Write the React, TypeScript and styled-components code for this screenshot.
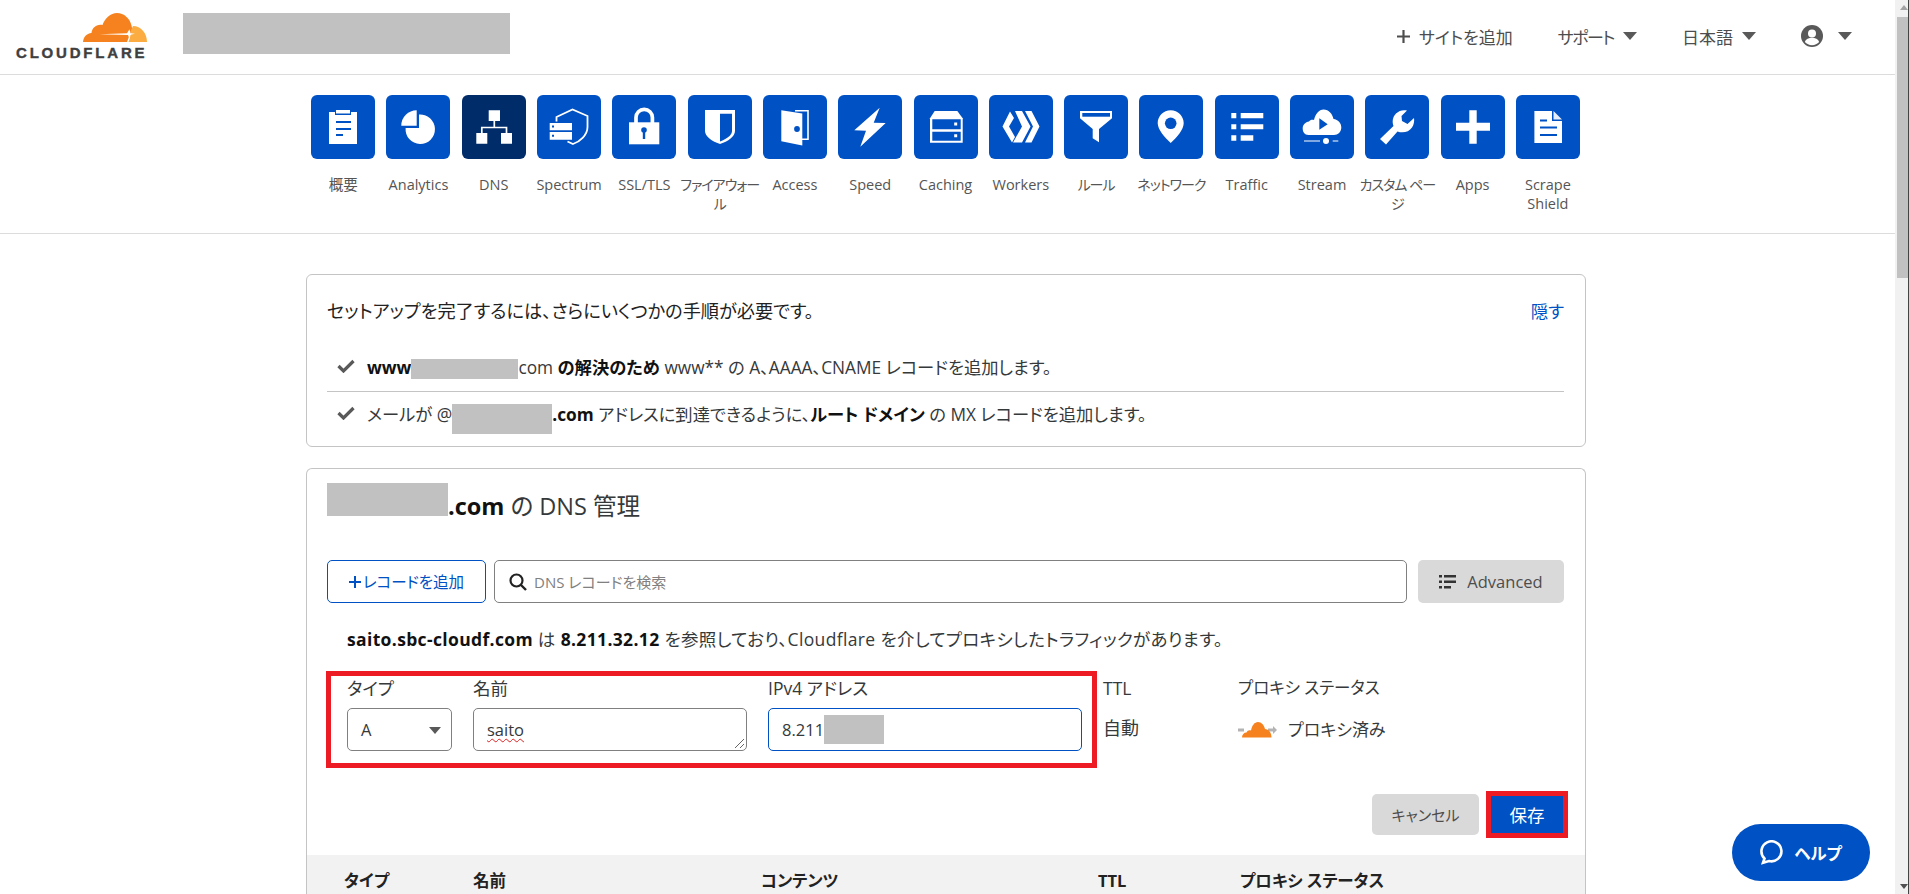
import React from 'react';
import styled, { createGlobalStyle } from 'styled-components';

const BLUE = '#0051c3';
const FONT = '"Open Sans", "Noto Sans CJK JP", sans-serif';

const Global = createGlobalStyle`
  html, body {
    margin: 0;
    height: 100%;
    overflow: hidden;
    background: #fff;
  }
  body {
    font-family: ${FONT};
    font-feature-settings: "palt";
    color: #36393a;
  }
  * {
    box-sizing: border-box;
  }
`;

const Root = styled.div`
  display: flex;
  height: 100vh;
  overflow: hidden;
`;

const Page = styled.div`
  flex: 1;
  min-width: 0;
  overflow: hidden;
`;

const ScrollTrack = styled.div`
  position: relative;
  flex: 0 0 14px;
  border-right: 1px solid #444;
  background: #f1f1f1;
`;

const ScrollThumb = styled.div`
  position: absolute;
  top: 17px;
  left: 2px;
  right: 0;
  height: 261px;
  background: #c1c1c1;
`;

const ArrowUp = styled.div`
  position: absolute;
  top: 5px;
  left: 5px;
  border: 4px solid transparent;
  border-top: 0;
  border-bottom: 5px solid #a3a3a3;
`;

const ArrowDown = styled.div`
  position: absolute;
  bottom: 5px;
  left: 5px;
  border: 4px solid transparent;
  border-bottom: 0;
  border-top: 5px solid #505050;
`;

const Header = styled.header`
  display: flex;
  align-items: flex-start;
  height: 75px;
  padding: 13px 43px 0 16px;
  border-bottom: 1px solid #dcdcdc;
`;

const LogoBlock = styled.div`
  display: flex;
  flex-direction: column;
  align-items: flex-end;
  width: 131px;
`;

const LogoText = styled.div`
  align-self: flex-start;
  margin-top: 3px;
  font-family: "Liberation Sans", sans-serif;
  font-size: 15px;
  line-height: 16px;
  font-weight: 700;
  letter-spacing: 2.8px;
  -webkit-text-stroke: 0.4px #404041;
  color: #404041;
  white-space: nowrap;
`;

const Redact = styled.span<{ $w: number; $h: number; $raise?: number }>`
  display: inline-block;
  width: ${p => p.$w}px;
  height: ${p => p.$h}px;
  margin-top: ${p => -p.$h / 2}px;
  margin-bottom: ${p => -p.$h / 2}px;
  background: #c1c1c1;
  vertical-align: ${p => p.$raise ?? 0}px;
`;

const AccountName = styled.div`
  width: 327px;
  height: 41px;
  margin-left: 36px;
  background: #c1c1c1;
`;

const HeaderRight = styled.div`
  display: flex;
  align-items: center;
  gap: 45px;
  height: 46px;
  margin-left: auto;
  font-size: 17px;
  color: #4d4d4d;
`;

const HeaderItem = styled.div<{ $gap?: number; $tight?: boolean }>`
  display: flex;
  align-items: center;
  gap: ${p => p.$gap ?? 9}px;
  letter-spacing: ${p => (p.$tight ? -1.5 : 0)}px;
  white-space: nowrap;
`;

const Caret = styled.span<{ $w?: number }>`
  display: block;
  width: 0;
  height: 0;
  border-left: ${p => (p.$w ?? 14) / 2}px solid transparent;
  border-right: ${p => (p.$w ?? 14) / 2}px solid transparent;
  border-top: ${p => Math.round((p.$w ?? 14) * 0.55)}px solid #595959;
`;

const Nav = styled.nav`
  display: flex;
  height: 159px;
  padding: 20px 0 0 305.5px;
  border-bottom: 1px solid #dcdcdc;
`;

const NavItem = styled.a<{ $kana?: boolean }>`
  display: flex;
  flex-direction: column;
  align-items: center;
  width: 75.3px;
  font-size: ${p => (p.$kana ? 14 : 14.5)}px;
  line-height: 19px;
  letter-spacing: ${p => (p.$kana ? -1 : 0)}px;
  color: #555;
  text-align: center;
  white-space: pre;
`;

const Tile = styled.div<{ $active?: boolean }>`
  width: 64px;
  height: 64px;
  margin-bottom: 16px;
  border-radius: 6px;
  background: ${p => (p.$active ? '#012c6a' : BLUE)};
`;

const Main = styled.main`
  width: 1280px;
  margin: 40px 0 0 306px;
`;

const Card = styled.section`
  border: 1px solid #c4c4c4;
  border-radius: 6px;
`;

const SetupCard = styled(Card)`
  height: 173px;
  padding: 22px 21px 0 20px;
`;

const SetupTop = styled.div`
  display: flex;
  justify-content: space-between;
  font-size: 18.2px;
  line-height: 28px;
  color: #222;
`;

const HideLink = styled.a`
  font-size: 17.5px;
  color: ${BLUE};
`;

const SetupRow = styled.div<{ $h: number; $line?: boolean }>`
  display: flex;
  align-items: center;
  gap: 12px;
  height: ${p => p.$h}px;
  padding: 0 0 2px 10px;
  border-bottom: ${p => (p.$line ? '1px solid #c4c4c4' : '0')};
  font-size: 17.3px;
  color: #36393a;
`;

const SetupList = styled.div`
  margin-top: 18px;
`;

const Strong = styled.b`
  font-weight: 700;
  color: #111;
`;

const DnsCard = styled(Card)`
  height: 520px;
  margin-top: 21px;
  padding-top: 18px;
  border-bottom: 0;
`;

const Inner = styled.div`
  padding: 0 21px 0 20px;
`;

const Heading = styled.h2`
  margin: 0;
  font-size: 23.5px;
  line-height: 38px;
  font-weight: 400;
  color: #36393a;
`;

const Toolbar = styled.div`
  display: flex;
  height: 43px;
  margin-top: 35px;
`;

const AddButton = styled.button`
  display: flex;
  align-items: center;
  justify-content: center;
  gap: 2px;
  width: 159px;
  border: 1px solid ${BLUE};
  border-radius: 5px;
  background: #fff;
  font: inherit;
  font-size: 15.5px;
  color: ${BLUE};
`;

const SearchBox = styled.div`
  display: flex;
  align-items: center;
  gap: 7px;
  flex: 1;
  margin: 0 11px 0 8px;
  padding-left: 14px;
  border: 1px solid #808080;
  border-radius: 5px;
  font-size: 15px;
  color: #808080;
`;

const GreyButton = styled.button<{ $w: number }>`
  display: flex;
  align-items: center;
  justify-content: center;
  gap: 11px;
  width: ${p => p.$w}px;
  border: 0;
  border-radius: 5px;
  background: #d9d9d9;
  font: inherit;
  font-size: 16.5px;
  color: #4d4d4d;
`;

const Status = styled.p`
  margin: 24px 0 0;
  padding-left: 20px;
  font-size: 17.5px;
  line-height: 24px;
  letter-spacing: 0.35px;
  color: #36393a;
`;

const FormRow = styled.div`
  position: relative;
  display: grid;
  grid-template-columns: 105px 274px 314px 114px auto;
  column-gap: 21px;
  margin-top: 27px;
  padding-left: 20px;
`;

const Annotation = styled.div`
  position: absolute;
  top: -7px;
  left: -1px;
  width: 771px;
  height: 97px;
  border: 5px solid #ed1c24;
  pointer-events: none;
`;

const FieldLabel = styled.label`
  display: block;
  height: 20px;
  margin-bottom: 10px;
  font-size: 17.5px;
  line-height: 20px;
  color: #36393a;
`;

const ProxyLabel = styled(FieldLabel)`
  font-size: 16.5px;
`;

const Field = styled.div<{ $focus?: boolean }>`
  position: relative;
  display: flex;
  align-items: center;
  height: 43px;
  padding-left: 13px;
  border: 1px solid ${p => (p.$focus ? BLUE : '#808080')};
  border-radius: 5px;
  font-size: 16.5px;
  color: #36393a;
`;

const SelectCaret = styled.span`
  position: absolute;
  top: 18px;
  right: 10px;
`;

const Grip = styled.svg`
  position: absolute;
  right: 1px;
  bottom: 1px;
`;

const Misspelt = styled.span`
  text-decoration: underline wavy #e02020 1px;
  text-underline-offset: 2px;
`;

const PlainValue = styled.div`
  height: 43px;
  font-size: 18px;
  line-height: 40px;
  color: #36393a;
`;

const ProxyValue = styled(PlainValue)`
  display: flex;
  align-items: center;
  gap: 11px;
  font-size: 17px;
`;

const Actions = styled.div`
  display: flex;
  align-items: center;
  justify-content: flex-end;
  gap: 12px;
  margin-top: 43px;
  padding-right: 1px;
`;

const SaveButton = styled.button`
  width: 72px;
  height: 37px;
  border: 0;
  outline: 5px solid #ed1c24;
  background: ${BLUE};
  font: inherit;
  font-size: 17.5px;
  color: #fff;
`;

const CancelButton = styled(GreyButton)`
  height: 41px;
  font-size: 15px;
`;

const TableHead = styled.div`
  display: grid;
  grid-template-columns: 129px 288px 337px 142px auto;
  align-items: center;
  height: 50px;
  margin-top: 20px;
  padding-left: 37px;
  background: #f2f2f2;
  font-size: 16.5px;
  font-weight: 700;
  color: #222;
`;

const HelpButton = styled.button`
  position: fixed;
  top: 824px;
  left: 1732px;
  display: flex;
  align-items: center;
  justify-content: center;
  gap: 10px;
  width: 138px;
  height: 57px;
  border: 0;
  border-radius: 29px;
  background: ${BLUE};
  font: inherit;
  font-size: 16.5px;
  font-weight: 700;
  color: #fff;
`;

const W = '#fff';

const tiles: { label: string; kana?: boolean; active?: boolean; icon: (bg: string) => React.ReactNode }[] = [
  {
    label: '概要',
    icon: bg => (
      <>
        <path fill={W} d="M18 17h6v3h16v-3h6v32H18z" />
        <rect x="25" y="15" width="14" height="3.5" fill={W} />
        <path fill={bg} d="M25 26h15v2H25zM25 33h15v2H25zM25 39h7v2h-7z" />
      </>
    ),
  },
  {
    label: 'Analytics',
    icon: () => (
      <>
        <path fill={W} d="M33 19.6A14.7 14.7 0 1 1 19.6 33H33z" />
        <path fill={W} d="M30.7 15.3v15.4H15.3A15.4 15.4 0 0 1 30.7 15.3z" />
      </>
    ),
  },
  {
    label: 'DNS',
    active: true,
    icon: () => (
      <>
        <path fill={W} d="M26.7 15.3H38V26H26.7zM14.3 38h11v10.7h-11zM39 38h11v10.7H39z" />
        <path fill="none" stroke={W} strokeWidth="1.7" d="M32.3 26v6.5M19.8 38v-5.5h24.7V38" />
      </>
    ),
  },
  {
    label: 'Spectrum',
    icon: bg => (
      <>
        <path fill={W} d="M12.7 28H35v7.3H12.7zM12.7 37H35v7.7H12.7z" />
        <path fill={bg} d="M15 30.5h2v2h-2zM15 39.8h2v2h-2z" />
        <path
          fill="none"
          stroke={W}
          strokeWidth="1.8"
          d="M19.5 26.5V22l16-7.5 15 6.5v11c0 8-7.5 14.5-14.5 17l-5.5-2.5"
        />
      </>
    ),
  },
  {
    label: 'SSL/TLS',
    icon: bg => (
      <>
        <path fill="none" stroke={W} strokeWidth="3.7" d="M24 29v-6.5a8.2 8.2 0 0 1 16.4 0V29" />
        <rect x="17" y="27.3" width="30.3" height="22" fill={W} />
        <circle cx="32" cy="35" r="2.8" fill={bg} />
        <path fill={bg} d="M30.8 36h2.4v8h-2.4z" />
      </>
    ),
  },
  {
    label: 'ファイアウォー\nル',
    kana: true,
    icon: bg => (
      <>
        <path fill={W} d="M17 15h30v21c0 5-6 10-15 13-9-3-15-8-15-13z" />
        <path fill={bg} d="M32 18.7h12V36c0 4-5 8-12 10.4z" />
      </>
    ),
  },
  {
    label: 'Access',
    icon: bg => (
      <>
        <path fill="none" stroke={W} strokeWidth="1.6" d="M32 15.8h13v28.5h-6" />
        <path fill={W} d="M18.3 15.3l21 3.2v32l-21-4.2z" />
        <circle cx="34" cy="34" r="2.9" fill={bg} />
      </>
    ),
  },
  {
    label: 'Speed',
    icon: () => <path fill={W} d="M41.7 12.7L16.3 35.3 28 35.7 22.3 51.7 47.7 28 35.7 27.7z" />,
  },
  {
    label: 'Caching',
    icon: bg => (
      <>
        <path fill={W} d="M20.7 16h22.6l5.4 7.3v24.4H16V23.3z" />
        <path fill={bg} d="M18.3 24.3h28.4v10H18.3zM18.3 36.7h28.4v9H18.3z" />
        <path fill={W} d="M40.2 27.5h3v3h-3zM40.2 39.2h3v3h-3z" />
      </>
    ),
  },
  {
    label: 'Workers',
    icon: () => (
      <path
        fill={W}
        d="M21 16.5l4 6.5-5 8.5 6 10.5-3 5.5-9.5-16zM26 16h7l8.5 15.5L33 47.5h-9l9-16zM36 16h6.5l8 15.5-8 16H36l8-16z"
      />
    ),
  },
  {
    label: 'ルール',
    kana: true,
    icon: bg => (
      <>
        <path fill={W} d="M16 16h32v7.3L35 34v13.3l-6.3-4V34L16 23.3z" />
        <rect x="18.3" y="18" width="27.7" height="3.7" fill={bg} />
      </>
    ),
  },
  {
    label: 'ネットワーク',
    kana: true,
    icon: bg => (
      <>
        <path fill={W} d="M31.7 15.3c7.2 0 13 5.8 13 13 0 6-7 14.500-13 19.700-6-5.200-13-13.700-13-19.700 0-7.200 5.800-13 13-13z" />
        <circle cx="31.700" cy="28.300" r="5.800" fill={bg} />
      </>
    ),
  },
  {
    label: 'Traffic',
    icon: () => (
      <path
        fill={W}
        d="M16.300 18h5v5.300h-5zM16.300 29.300h5v5h-5zM16.300 40.300h5v5.400h-5zM25.700 18h22.600v5.300H25.700zM25.700 29.300h22.600v5H25.700zM25.700 40.300h12.600v5.400H25.700z"
      />
    ),
  },
  {
    label: 'Stream',
    icon: bg => (
      <>
        <path
          fill={W}
          d="M18.500 40C14.500 40 12.700 37 12.700 33.500 12.700 29.500 15.500 27 19 26.500 20 25 22 24.500 24 25 25.500 19 29 14.500 33.500 14.500 39 14.500 42.500 19 43.500 24 48 24.500 51.300 28 51.300 32.500 51.300 37 48 40 44 40z"
        />
        <path fill={bg} d="M29.300 23.300l8.400 6-8.400 5.400z" />
        <path fill={W} opacity=".5" d="M14 45h16v2H14zM42.700 45h5.600v2h-5.600z" />
        <circle cx="36" cy="46" r="3" fill={W} />
      </>
    ),
  },
  {
    label: 'カスタム ペー\nジ',
    kana: true,
    icon: () => (
      <path
        fill={W}
        d="M15 44l6 5.500 11.500-13c5.500 2 11.500.5 14.500-4 2-3 2.500-6.500 2-9.500l-6.500 6-5.500-3-.5-5 5.500-5.500c-4-1-8 0-11 3-3.500 3.500-4 8.500-2.500 12.500z"
      />
    ),
  },
  {
    label: 'Apps',
    icon: () => <path fill={W} d="M28.300 15.300h7.400v12.400H49v8H35.700v13h-7.400v-13H15v-8h13.300z" />,
  },
  {
    label: 'Scrape\nShield',
    icon: bg => (
      <>
        <path fill={W} d="M18.400 16H36v10h10v22H18.400z" />
        <path fill={W} opacity=".9" d="M37.500 16l8.500 8.500h-8.500z" />
        <path fill={bg} d="M24 24.500h7v2h-7zM24 31.500h17v2H24zM24 39h17v2H24z" />
      </>
    ),
  },
];

const Check = () => (
  <svg width="18" height="14" viewBox="0 0 18 14">
    <path fill="none" stroke="#595959" strokeWidth="3.200" d="M1.500 7l5 5L16.500 2" />
  </svg>
);

const CloudLogo = () => (
  <svg width="64" height="29" viewBox="0 0 64 29">
    <path
      fill="#f6821f"
      d="M0 29C.5 24 3.500 20.500 8.500 20 9 14.500 14 10.500 19.500 12 22 5 27.500 0 34 0c7 0 13 5.500 14.500 12.500L50 20l-3 1-3 8z"
    />
    <path
      fill="#fbad41"
      d="M50 13c8 0 14 7 14 16H45.500c1-2.500 1.500-4.500 1.500-7l2-1.500c-1-.5-1.500-1-1.500-2z"
    />
    <path fill="#fff" d="M16.500 21.200L44 20.300l2.500-4 1 4 4.500.5-4.500 1-.8 4.500-1.700-4.300z" />
  </svg>
);

const ProxyCloud = () => (
  <svg width="39" height="16" viewBox="0 0 39 16">
    <path fill="#b3b3b3" d="M0 6.500h6v3H0zM30 6.500h5V4l4 4-4 4V9.500h-5z" />
    <path
      fill="#f6821f"
      d="M4 15.500c0-3 2-5 4.500-5C9.500 8.500 11 8 13 8.500 14 3.500 16.500 0 20 0s6 3 7 7c3.500 0 6.500 3.500 6.500 8.500z"
    />
  </svg>
);

const Avatar = () => (
  <svg width="22" height="22" viewBox="0 0 22 22">
    <circle cx="11" cy="11" r="11" fill="#595959" />
    <circle cx="11" cy="8.500" r="4" fill="#fff" />
    <path fill="#fff" d="M3.800 17c1-3 4-4.200 7.200-4.200s6.200 1.200 7.200 4.200c-1.800 2-4.300 3.200-7.200 3.200S5.600 19 3.800 17z" />
  </svg>
);

const Plus = ({ color, size }: { color: string; size: number }) => (
  <svg width={size} height={size} viewBox="0 0 12 12">
    <path fill={color} d="M5 0h2v5h5v2H7v5H5V7H0V5h5z" />
  </svg>
);

export default function App() {
  return (
    <Root>
      <Global />
      <Page>
        <Header>
          <LogoBlock>
            <CloudLogo />
            <LogoText>CLOUDFLARE</LogoText>
          </LogoBlock>
          <AccountName />
          <HeaderRight>
            <HeaderItem>
              <Plus color="#4d4d4d" size={13} />
              サイトを追加
            </HeaderItem>
            <HeaderItem $tight>
              サポート
              <Caret />
            </HeaderItem>
            <HeaderItem>
              日本語
              <Caret />
            </HeaderItem>
            <HeaderItem $gap={15}>
              <Avatar />
              <Caret />
            </HeaderItem>
          </HeaderRight>
        </Header>

        <Nav>
          {tiles.map(t => {
            const bg = t.active ? '#012c6a' : BLUE;
            return (
              <NavItem key={t.label} $kana={t.kana}>
                <Tile $active={t.active}>
                  <svg width="64" height="64" viewBox="0 0 64 64">
                    {t.icon(bg)}
                  </svg>
                </Tile>
                {t.label}
              </NavItem>
            );
          })}
        </Nav>

        <Main>
          <SetupCard>
            <SetupTop>
              セットアップを完了するには、さらにいくつかの手順が必要です。
              <HideLink>隠す</HideLink>
            </SetupTop>
            <SetupList>
              <SetupRow $h={49} $line>
                <Check />
                <span>
                  <Strong>www</Strong>
                  <Redact $w={107} $h={20} $raise={5} />
                  com <Strong>の解決のため</Strong> www** の A、AAAA、CNAME レコードを追加します。
                </span>
              </SetupRow>
              <SetupRow $h={44}>
                <Check />
                <span>
                  メールが @<Redact $w={100} $h={30} $raise={2} />
                  <Strong>.com</Strong> アドレスに到達できるように、<Strong>ルート ドメイン</Strong> の MX レコードを追加します。
                </span>
              </SetupRow>
            </SetupList>
          </SetupCard>

          <DnsCard>
            <Inner>
              <Heading>
                <Redact $w={121} $h={33} $raise={16} />
                <Strong as="b">.com</Strong> の DNS 管理
              </Heading>

              <Toolbar>
                <AddButton>
                  <Plus color={BLUE} size={12} />
                  レコードを追加
                </AddButton>
                <SearchBox>
                  <svg width="18" height="18" viewBox="0 0 18 18">
                    <circle cx="7.500" cy="7.500" r="6" fill="none" stroke="#222" strokeWidth="2.200" />
                    <path stroke="#222" strokeWidth="2.400" d="M12 12l5 5" />
                  </svg>
                  DNS レコードを検索
                </SearchBox>
                <GreyButton $w={146}>
                  <svg width="17" height="14" viewBox="0 0 17 14">
                    <path
                      fill="#333"
                      d="M0 0h3v2.500H0zM5 0h12v2.500H5zM0 5.500h3V8H0zM5 5.500h12V8H5zM0 11h3v2.500H0zM5 11h7v2.500H5z"
                    />
                  </svg>
                  Advanced
                </GreyButton>
              </Toolbar>

              <Status>
                <Strong>saito.sbc-cloudf.com</Strong> は <Strong>8.211.32.12</Strong> を参照しており、Cloudflare
                を介してプロキシしたトラフィックがあります。
              </Status>

              <FormRow>
                <div>
                  <FieldLabel>タイプ</FieldLabel>
                  <Field>
                    A
                    <SelectCaret>
                      <Caret $w={13} />
                    </SelectCaret>
                  </Field>
                </div>
                <div>
                  <FieldLabel>名前</FieldLabel>
                  <Field>
                    <Misspelt>saito</Misspelt>
                    <Grip width="11" height="11" viewBox="0 0 11 11">
                      <path stroke="#666" fill="none" d="M1 10l9-9M6 10l4-4" />
                    </Grip>
                  </Field>
                </div>
                <div>
                  <FieldLabel>IPv4 アドレス</FieldLabel>
                  <Field $focus>
                    8.211
                    <Redact $w={60} $h={29} />
                  </Field>
                </div>
                <div>
                  <FieldLabel>TTL</FieldLabel>
                  <PlainValue>自動</PlainValue>
                </div>
                <div>
                  <ProxyLabel>プロキシ ステータス</ProxyLabel>
                  <ProxyValue>
                    <ProxyCloud />
                    プロキシ済み
                  </ProxyValue>
                </div>
                <Annotation />
              </FormRow>

              <Actions>
                <CancelButton $w={107}>キャンセル</CancelButton>
                <SaveButton>保存</SaveButton>
              </Actions>
            </Inner>

            <TableHead>
              <span>タイプ</span>
              <span>名前</span>
              <span>コンテンツ</span>
              <span>TTL</span>
              <span>プロキシ ステータス</span>
            </TableHead>
          </DnsCard>
        </Main>
      </Page>

      <ScrollTrack>
        <ArrowUp />
        <ScrollThumb />
        <ArrowDown />
      </ScrollTrack>

      <HelpButton>
        <svg width="24" height="25" viewBox="0 0 24 25">
          <path
            fill="none"
            stroke="#fff"
            strokeWidth="2.600"
            d="M4.500 18.500A10 10 0 1 1 9 21l-6 1.800z"
          />
        </svg>
        ヘルプ
      </HelpButton>
    </Root>
  );
}
